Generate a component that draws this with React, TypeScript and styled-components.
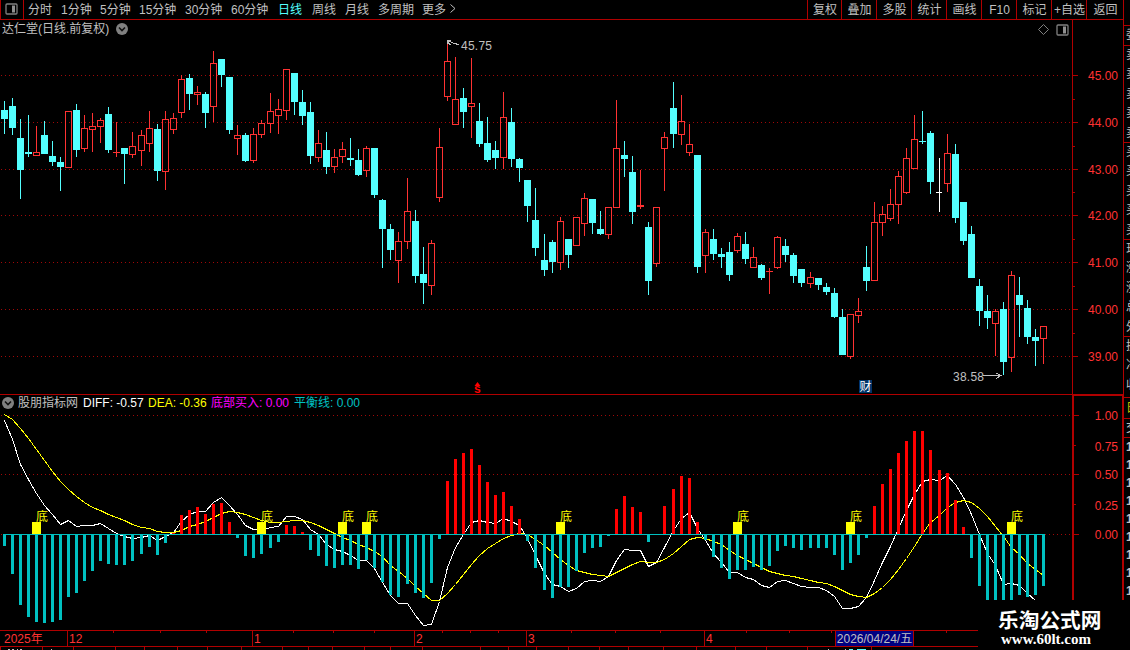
import styled, { createGlobalStyle } from 'styled-components';

type CandleKind = 'u' | 'd' | 'f';
type Candle = [CandleKind, number, number, number, number];

const colors = {
  line: '#b00000',
  up: '#ff3232',
  down: '#54ffff',
  text: '#c0c0c0',
  bar: '#00c0c0',
  muted: '#808080',
};

const PERIODS = [
  { label: '分时', width: 33 },
  { label: '1分钟', width: 39 },
  { label: '5分钟', width: 39 },
  { label: '15分钟', width: 46 },
  { label: '30分钟', width: 46 },
  { label: '60分钟', width: 47 },
  { label: '日线', width: 34 },
  { label: '周线', width: 33 },
  { label: '月线', width: 33 },
  { label: '多周期', width: 44 },
  { label: '更多', width: 27 },
];

const TOOLS = ['复权', '叠加', '多股', '统计', '画线', 'F10', '标记', '+自选', '返回'];

// kind, high, body top, body bottom, low
const CANDLES: Candle[] = [
  ['d', 101, 110, 119, 134], ['d', 98, 106, 128, 135], ['d', 119, 138, 170, 199], ['d', 115, 152, 154, 157],
  ['u', 126, 152, 156, 156], ['d', 121, 135, 154, 154], ['d', 141, 156, 162, 166], ['d', 157, 162, 167, 191],
  ['u', 111, 111, 168, 168], ['d', 104, 110, 150, 157], ['u', 115, 128, 149, 152], ['u', 113, 126, 130, 152],
  ['u', 118, 120, 127, 143], ['d', 107, 114, 150, 153], ['u', 122, 152, 153, 157], ['d', 148, 148, 154, 184],
  ['u', 132, 146, 155, 158], ['u', 130, 135, 151, 166], ['u', 111, 128, 144, 152], ['d', 124, 129, 171, 181],
  ['u', 111, 119, 172, 190], ['u', 113, 118, 130, 134], ['u', 75, 79, 113, 118], ['d', 74, 78, 94, 110],
  ['u', 86, 92, 95, 105], ['d', 92, 94, 113, 128], ['u', 51, 63, 107, 122], ['d', 59, 59, 75, 87],
  ['d', 77, 77, 130, 134], ['u', 125, 135, 139, 155], ['d', 133, 135, 161, 162], ['u', 128, 134, 161, 163],
  ['u', 120, 123, 135, 138], ['u', 93, 111, 124, 133], ['u', 99, 109, 116, 134], ['u', 69, 69, 111, 120],
  ['d', 73, 73, 102, 115], ['d', 90, 102, 116, 125], ['d', 102, 112, 156, 164], ['u', 130, 143, 158, 162],
  ['d', 132, 150, 167, 174], ['u', 149, 157, 167, 173], ['u', 142, 149, 157, 163], ['d', 138, 158, 160, 166],
  ['d', 149, 160, 175, 176], ['u', 146, 148, 171, 177], ['d', 148, 148, 195, 198], ['d', 199, 200, 229, 268],
  ['d', 224, 229, 250, 260], ['u', 232, 241, 261, 283], ['u', 178, 211, 242, 249], ['d', 210, 221, 276, 283],
  ['d', 247, 274, 283, 304], ['u', 240, 243, 286, 295], ['u', 128, 147, 198, 202], ['u', 43, 61, 97, 101],
  ['u', 57, 99, 125, 125], ['d', 88, 98, 112, 128], ['u', 58, 103, 107, 138], ['d', 103, 121, 144, 147],
  ['d', 117, 143, 160, 162], ['d', 141, 150, 158, 169], ['u', 92, 117, 158, 169], ['d', 108, 122, 159, 167],
  ['d', 158, 159, 168, 182], ['d', 180, 180, 206, 222], ['d', 188, 220, 248, 256], ['d', 234, 260, 270, 276],
  ['d', 240, 242, 262, 273], ['u', 217, 221, 263, 270], ['d', 239, 239, 255, 268], ['u', 217, 217, 246, 246],
  ['u', 193, 198, 224, 236], ['d', 199, 199, 223, 234], ['d', 211, 229, 234, 235], ['u', 207, 207, 235, 239],
  ['u', 100, 148, 208, 208], ['d', 141, 155, 159, 177], ['d', 156, 172, 212, 224], ['u', 170, 205, 207, 209],
  ['d', 222, 227, 281, 295], ['u', 207, 207, 264, 267], ['u', 132, 137, 149, 191], ['d', 82, 108, 134, 148],
  ['u', 95, 121, 135, 145], ['u', 124, 144, 153, 156], ['d', 155, 155, 267, 273], ['u', 229, 232, 256, 273],
  ['d', 229, 239, 254, 260], ['d', 248, 254, 257, 268], ['d', 242, 252, 275, 281], ['u', 233, 236, 251, 253],
  ['d', 232, 244, 259, 264], ['u', 247, 257, 268, 268], ['d', 264, 265, 278, 280], ['u', 268, 271, 272, 294],
  ['u', 236, 237, 268, 269], ['d', 239, 246, 255, 262], ['d', 253, 255, 276, 283], ['d', 269, 269, 283, 287],
  ['u', 272, 277, 284, 288], ['d', 278, 278, 285, 290], ['d', 283, 287, 292, 295], ['d', 288, 293, 317, 318],
  ['d', 309, 317, 355, 355], ['u', 314, 314, 357, 359], ['u', 298, 311, 316, 323], ['d', 246, 267, 281, 291],
  ['u', 202, 222, 281, 281], ['u', 206, 214, 223, 236], ['u', 189, 204, 219, 221], ['u', 171, 176, 205, 224],
  ['u', 148, 158, 193, 194], ['u', 115, 139, 169, 169], ['d', 111, 141, 142, 144], ['d', 131, 133, 182, 194],
  ['f', 158, 192, 193, 212], ['u', 134, 153, 184, 192], ['d', 144, 154, 218, 223], ['d', 202, 202, 241, 245],
  ['d', 226, 234, 278, 278], ['d', 279, 286, 311, 326], ['d', 295, 311, 318, 329], ['u', 309, 311, 324, 356],
  ['d', 302, 309, 362, 375], ['u', 271, 275, 358, 372], ['d', 277, 295, 305, 337], ['d', 300, 308, 337, 344],
  ['d', 329, 337, 341, 366], ['u', 326, 326, 339, 364],
];

const BARS = [
  546, 574, 605, 617, 622, 623, 622, 620, 597, 593, 581, 571, 561, 564, 565, 565, 561, 554, 547, 555,
  543, 533, 515, 510, 507, 514, 504, 503, 522, 538, 556, 558, 554, 548, 542, 525, 526, 532, 550, 556,
  566, 568, 565, 565, 569, 560, 568, 582, 595, 597, 584, 593, 598, 583, 539, 481, 459, 453, 449, 465,
  482, 495, 492, 506, 519, 541, 568, 590, 598, 587, 587, 571, 553, 548, 547, 536, 509, 496, 507, 512,
  542, 535, 506, 489, 476, 478, 522, 540, 557, 568, 579, 570, 570, 567, 570, 566, 551, 546, 548, 550,
  548, 548, 548, 555, 570, 563, 555, 538, 506, 484, 469, 453, 441, 431, 431, 450, 470, 473, 500, 527,
  558, 586, 600, 600, 600, 600, 595, 597, 595, 586,
];

const DIFF = [
  420, 439, 464, 479, 493, 505, 514, 524, 520, 526, 525, 525, 523, 528, 533, 536, 538, 537, 535, 540,
  536, 532, 521, 514, 511, 511, 502, 497, 505, 514, 525, 529, 530, 527, 526, 516, 516, 519, 529, 534,
  544, 549, 551, 555, 560, 560, 568, 582, 595, 603, 603, 615, 625, 624, 601, 567, 547, 534, 522, 520,
  522, 523, 518, 521, 525, 538, 555, 573, 584, 586, 591, 588, 581, 580, 581, 576, 560, 549, 550, 550,
  566, 562, 547, 530, 518, 512, 528, 540, 553, 562, 572, 572, 577, 579, 585, 587, 581, 580, 583, 586,
  587, 587, 590, 596, 608, 608, 606, 597, 580, 562, 546, 528, 510, 494, 481, 479, 480, 475, 484, 497,
  514, 534, 553, 565, 584, 583, 585, 593, 600,
];

const DEA = [
  414, 419, 428, 438, 449, 460, 471, 481, 489, 496, 502, 507, 510, 514, 517, 520, 524, 527, 528, 531,
  532, 532, 530, 526, 524, 521, 517, 513, 511, 512, 514, 517, 520, 522, 522, 521, 520, 520, 522, 525,
  529, 533, 537, 540, 544, 547, 551, 556, 565, 571, 578, 586, 593, 600, 600, 593, 584, 574, 564, 555,
  548, 543, 538, 535, 533, 534, 539, 545, 552, 559, 565, 570, 572, 574, 575, 576, 572, 568, 564, 561,
  562, 562, 559, 553, 546, 539, 537, 538, 541, 544, 550, 555, 559, 563, 567, 571, 573, 575, 576, 578,
  580, 582, 583, 586, 590, 594, 596, 597, 593, 587, 579, 569, 558, 546, 533, 522, 515, 507, 502, 500,
  502, 508, 516, 526, 536, 547, 554, 563, 569, 575,
];

const SIGNALS = [4, 32, 42, 45, 69, 91, 105, 125];
const PRICE_GRID = [75, 122, 169, 215, 262, 309, 356];
const PRICE_MINOR = [99, 146, 192, 239, 286, 333];
const PRICE_LABELS = ['45.00', '44.00', '43.00', '42.00', '41.00', '40.00', '39.00'];
const ZERO_Y = 534;

const SCALE = [
  { label: '1.00', height: 31 },
  { label: '0.75', height: 28 },
  { label: '0.50', height: 31 },
  { label: '0.25', height: 29 },
  { label: '0.00', height: 20 },
];

const MONTHS = [
  { label: '2025年', width: 67, inset: 4 },
  { label: '12', width: 185, inset: 1 },
  { label: '1', width: 162, inset: 1 },
  { label: '2', width: 112, inset: 1 },
  { label: '3', width: 178, inset: 1 },
  { label: '4', width: 131, inset: 1 },
];
const WEEK_TICKS = [113, 160, 206, 293, 333, 374, 442, 470, 498, 571, 615, 660, 746, 789, 831, 946];
const TAB_TICKS = [
  0, 42, 73, 115, 144, 177, 207, 241, 282, 308, 332, 364, 390, 422, 480, 508, 536, 568, 599, 628, 663, 696,
  735, 766, 807, 871,
];

const QUOTE_GROUPS = [
  { chars: ['委'], top: 26, height: 19, row: 19 },
  { chars: ['卖', '卖', '卖', '卖', '卖'], top: 46, height: 96, row: 19.4 },
  { chars: ['买', '买', '买', '买', '买'], top: 143, height: 96, row: 19.4 },
  { chars: ['现', '涨', '涨', '总', '外'], top: 240, height: 96, row: 19.4 },
  { chars: ['换', '净', '收'], top: 337, height: 60, row: 19.4 },
];

const candleX = (i: number) => 4 + 8 * i + Math.floor(i * 0.0602 + 0.02);
const toPoints = (values: number[]) => values.map((y, i) => `${candleX(i) + 0.5},${y + 0.5}`).join(' ');

const GlobalStyle = createGlobalStyle`
  body {
    margin: 0;
    background: #000;
    overflow: hidden;
  }
`;

const Screen = styled.div`
  position: relative;
  display: flex;
  width: 1130px;
  height: 650px;
  overflow: hidden;
  background: #000;
  color: ${colors.text};
  font-family: 'Liberation Sans', 'Noto Sans CJK SC', sans-serif;
  font-size: 12px;
  line-height: 16px;
  white-space: nowrap;

  svg {
    display: block;
  }
`;

const Terminal = styled.main`
  display: flex;
  flex-direction: column;
  width: 1123px;
`;

const TopBar = styled.nav`
  display: flex;
  box-sizing: border-box;
  height: 20px;
  border-bottom: 1px solid ${colors.line};
`;

const LayoutButton = styled.div`
  display: flex;
  box-sizing: border-box;
  width: 24px;
  padding: 3px 0 0 4px;
  border: solid ${colors.line};
  border-width: 0 1px;
`;

const PeriodList = styled.div`
  display: flex;
  flex: 1;
  padding-left: 4px;
`;

const Period = styled.span<{ $width: number; $active: boolean }>`
  width: ${(p) => p.$width}px;
  line-height: 20px;
  color: ${(p) => (p.$active ? colors.down : colors.text)};
`;

const MoreArrow = styled.svg`
  margin-top: 4px;
`;

const Tool = styled.span<{ $wide: boolean }>`
  box-sizing: border-box;
  width: ${(p) => (p.$wide ? 35 : 34)}px;
  padding-left: 1px;
  border-left: 1px solid ${colors.line};
  text-align: center;
  line-height: 20px;

  &:last-child {
    width: 37px;
  }
`;

const Pane = styled.section<{ $height: number }>`
  position: relative;
  display: flex;
  height: ${(p) => p.$height}px;
`;

const PricePane = styled(Pane)`
  border-bottom: 1px solid ${colors.line};
`;

const PaneHeader = styled.header<{ $top: number; $left: number; $gap: number }>`
  position: absolute;
  top: ${(p) => p.$top}px;
  left: ${(p) => p.$left}px;
  display: flex;
  align-items: center;
  gap: ${(p) => p.$gap}px;
  height: 16px;
`;

const PaneActions = styled.div`
  position: absolute;
  top: 4px;
  right: 54px;
  display: flex;
  gap: 7px;
`;

const Legend = styled.span<{ $color: string; $width: number }>`
  width: ${(p) => p.$width}px;
  color: ${(p) => p.$color};
`;

const Axis = styled.aside<{ $thick?: boolean }>`
  position: relative;
  box-sizing: border-box;
  width: 51px;
  color: ${colors.up};
  border-left: ${(p) => (p.$thick ? 2 : 1)}px solid ${colors.line};
  border-right: ${(p) => (p.$thick ? 1 : 0)}px solid ${colors.line};
  border-top: ${(p) => (p.$thick ? 1 : 0)}px solid ${colors.line};
`;

const AxisTicks = styled.svg`
  position: absolute;
  top: 0;
  left: 0;
`;

const AxisLabels = styled.div<{ $top: number; $right: number }>`
  display: flex;
  flex-direction: column;
  align-items: flex-end;
  padding: ${(p) => `${p.$top}px ${p.$right}px 0 0`};
`;

const AxisLabel = styled.span<{ $height: number }>`
  height: ${(p) => p.$height}px;
`;

const TimeAxis = styled.div`
  position: relative;
  display: flex;
  box-sizing: border-box;
  height: 17px;
  border: solid ${colors.line};
  border-width: 1px 0;
`;

const Month = styled.span<{ $width: number; $inset: number }>`
  box-sizing: border-box;
  width: ${(p) => p.$width}px;
  padding-left: ${(p) => p.$inset}px;
  color: ${colors.up};

  & + & {
    border-left: 1px solid ${colors.line};
  }
`;

const CursorDate = styled.span`
  box-sizing: border-box;
  width: 79px;
  border: solid ${colors.line};
  border-width: 0 1px;
  background: #000080;
  text-align: center;
`;

const QuoteStrip = styled.aside`
  position: relative;
  box-sizing: border-box;
  width: 7px;
  padding-top: 25px;
  overflow: hidden;
  border-left: 1px solid ${colors.line};
`;

const QuoteGroup = styled.div<{ $height: number; $row: number }>`
  height: ${(p) => p.$height}px;
  padding-left: 2px;
  overflow: hidden;
  border-top: 1px solid ${colors.line};
  line-height: ${(p) => p.$row}px;
`;

const QuoteChar = styled.div<{ $color?: string }>`
  color: ${(p) => p.$color ?? colors.text};
`;

const TickRows = styled(QuoteGroup)`
  font-weight: 700;
`;

const Watermark = styled.div`
  position: absolute;
  right: 0;
  bottom: 0;
  box-sizing: border-box;
  width: 152px;
  height: 50px;
  padding: 7px 0 0 20px;
  background: #000;
  color: #fff;
  font-weight: 700;
`;

const WatermarkName = styled.div`
  font-family: 'Noto Sans CJK SC', sans-serif;
  font-size: 20.7px;
  line-height: 24px;
`;

const WatermarkUrl = styled.div`
  padding-left: 3px;
  font-family: 'Liberation Serif', serif;
  font-size: 15px;
  line-height: 16px;
`;

function PanelIcon() {
  return (
    <svg width="13" height="12" viewBox="0 0 13 12">
      <rect x="1" y="1" width="11" height="10" rx="1" fill="none" stroke={colors.muted} strokeWidth="1.3" />
      <rect x="7" y="2.5" width="3" height="7" fill="#909090" />
    </svg>
  );
}

function DropIcon() {
  return (
    <svg width="12" height="12" viewBox="0 0 12 12">
      <circle cx="6" cy="6" r="6" fill={colors.muted} />
      <path d="M3 4.5 L6 7.5 L9 4.5" fill="none" stroke="#101010" strokeWidth="1.6" />
    </svg>
  );
}

function GridLine({ y, from = 1 }: { y: number; from?: number }) {
  return <line x1={from} x2="1071" y1={y + 0.5} y2={y + 0.5} stroke="#a00808" strokeDasharray="1 3" />;
}

function CandleShape({ candle, x }: { candle: Candle; x: number }) {
  const [kind, high, top, bottom, low] = candle;
  const color = { u: colors.up, d: colors.down, f: '#ffffff' }[kind];
  const hollow = kind === 'u' && bottom - top > 2;
  return (
    <g fill={color}>
      <rect x={x} y={high} width="1" height={top - high} />
      <rect x={x} y={bottom} width="1" height={low - bottom} />
      {hollow ? (
        <rect x={x - 2.5} y={top + 0.5} width="6" height={bottom - top - 1} fill="none" stroke={color} />
      ) : (
        <rect x={x - 3} y={top} width={kind === 'f' ? 6 : 7} height={bottom - top} />
      )}
      {kind === 'f' && <rect x={x} y={top} width="1" height={bottom - top} />}
    </g>
  );
}

function PriceChart() {
  return (
    <svg width="1072" height="374" viewBox="0 20 1072 374" shapeRendering="crispEdges">
      {PRICE_GRID.map((y) => (
        <GridLine key={y} y={y} />
      ))}
      {CANDLES.map((candle, i) => (
        <CandleShape key={i} candle={candle} x={candleX(i)} />
      ))}
      <g fill="none" stroke={colors.text}>
        <path d="M447.5 44V40.5H451M447 41.5H450L454 43.5L459 44.5M447 42L451 45" />
        <path d="M983 375.5H1001M996 373L1001 375.5L996 378.5" />
      </g>
      <g fill={colors.text} fontSize="12">
        <text x="461" y="50" textLength="31">45.75</text>
        <text x="953" y="381" textLength="31">38.58</text>
      </g>
      <g fill="#ff0000" shapeRendering="auto">
        <text x="474" y="393" fontSize="12" fontWeight="700">s</text>
        <path d="M474.5 386L477.5 382L480.5 386Z" />
      </g>
      <rect x="859" y="380" width="13" height="13" fill="#003468" />
      <text x="859.5" y="391" fontSize="12" fill="#ffffff">财</text>
    </svg>
  );
}

function IndicatorChart() {
  return (
    <svg width="1072" height="235" viewBox="0 395 1072 235" shapeRendering="crispEdges">
      <GridLine y={415} />
      <GridLine y={474} />
      <GridLine y={ZERO_Y} />
      <g fill="none" strokeWidth="1">
        <polyline points={toPoints(DIFF)} stroke="#ffffff" />
        <polyline points={toPoints(DEA)} stroke="#ffff00" />
      </g>
      {BARS.map((y, i) => (
        <rect
          key={i}
          x={candleX(i) - 1}
          y={Math.min(y, ZERO_Y)}
          width="3"
          height={Math.abs(y - ZERO_Y)}
          fill={y < ZERO_Y ? '#ff0000' : colors.bar}
        />
      ))}
      {SIGNALS.map((i) => (
        <g key={i} fill="#ffff00">
          <rect x={candleX(i) - 4} y="522" width="9" height="12" />
          <text x={candleX(i)} y="521" fontSize="12">底</text>
        </g>
      ))}
      <rect x="3" y={ZERO_Y} width="1042" height="1" fill={colors.bar} />
    </svg>
  );
}

function TickMarks({ major, minor, top, height }: { major: number[]; minor: number[]; top: number; height: number }) {
  return (
    <AxisTicks width="6" height={height} viewBox={`0 ${top} 6 ${height}`} fill={colors.line}>
      {major.map((y) => (
        <rect key={y} y={y} width="5" height="1" />
      ))}
      {minor.map((y) => (
        <rect key={y} y={y} width="2" height="1" />
      ))}
    </AxisTicks>
  );
}

function App() {
  return (
    <Screen>
      <GlobalStyle />
      <Terminal>
        <TopBar>
          <LayoutButton>
            <PanelIcon />
          </LayoutButton>
          <PeriodList>
            {PERIODS.map(({ label, width }) => (
              <Period key={label} $width={width} $active={label === '日线'}>
                {label}
              </Period>
            ))}
            <MoreArrow width="8" height="10" viewBox="0 0 8 10">
              <path d="M1.5 0.5L6 4.5L1.5 8.5" fill="none" stroke={colors.text} />
            </MoreArrow>
          </PeriodList>
          {TOOLS.map((label, i) => (
            <Tool key={label} $wide={i > 0}>
              {label}
            </Tool>
          ))}
        </TopBar>

        <PricePane $height={374}>
          <PriceChart />
          <PaneHeader $top={1} $left={2} $gap={7}>
            <span>达仁堂(日线.前复权)</span>
            <DropIcon />
          </PaneHeader>
          <PaneActions>
            <svg width="11" height="11" viewBox="0 0 11 11">
              <path d="M5.5 0.5L10.5 5.5L5.5 10.5L0.5 5.5Z" fill="none" stroke={colors.muted} />
            </svg>
            <PanelIcon />
          </PaneActions>
          <Axis>
            <TickMarks major={PRICE_GRID} minor={PRICE_MINOR} top={20} height={374} />
            <AxisLabels $top={48} $right={5}>
              {PRICE_LABELS.map((label) => (
                <AxisLabel key={label} $height={46.8}>
                  {label}
                </AxisLabel>
              ))}
            </AxisLabels>
          </Axis>
        </PricePane>

        <Pane $height={235}>
          <IndicatorChart />
          <PaneHeader $top={0} $left={2} $gap={4}>
            <DropIcon />
            <Legend $color={colors.text} $width={61}>股朋指标网</Legend>
            <Legend $color="#ffffff" $width={61}>DIFF: -0.57</Legend>
            <Legend $color="#ffff00" $width={59}>DEA: -0.36</Legend>
            <Legend $color="#ff00ff" $width={79}>底部买入: 0.00</Legend>
            <Legend $color={colors.bar} $width={68}>平衡线: 0.00</Legend>
          </PaneHeader>
          <Axis $thick>
            <TickMarks major={[415, 474, 534]} minor={[445, 504]} top={396} height={230} />
            <AxisLabels $top={12} $right={4}>
              {SCALE.map(({ label, height }) => (
                <AxisLabel key={label} $height={height}>
                  {label}
                </AxisLabel>
              ))}
            </AxisLabels>
          </Axis>
        </Pane>

        <TimeAxis>
          {MONTHS.map(({ label, width, inset }) => (
            <Month key={label} $width={width} $inset={inset}>
              {label}
            </Month>
          ))}
          <CursorDate>2026/04/24/五</CursorDate>
          <AxisTicks width="978" height="2" fill={colors.line}>
            {WEEK_TICKS.map((x) => (
              <rect key={x} x={x} width="1" height="2" />
            ))}
          </AxisTicks>
        </TimeAxis>

        <svg width="978" height="3" shapeRendering="crispEdges">
          {TAB_TICKS.map((x) => (
            <rect key={x} x={x} width="1" height="3" fill={colors.line} />
          ))}
          <path d="M8 2.5H10M12 2.5H14M17 2.5H18M20 2.5H22M51 2.5H52M828 2.5H829M845 2.5H846" stroke={colors.text} />
          <path d="M849 2.5H853M857 2.5H866" stroke={colors.down} />
        </svg>
      </Terminal>

      <QuoteStrip>
        {QUOTE_GROUPS.map(({ chars, top, height, row }) => (
          <QuoteGroup key={top} $height={height} $row={row}>
            {chars.map((char, i) => (
              <QuoteChar key={i}>{char}</QuoteChar>
            ))}
          </QuoteGroup>
        ))}
        <QuoteGroup $height={20} $row={21}>
          <QuoteChar $color="#c0c000">日</QuoteChar>
        </QuoteGroup>
        <QuoteGroup $height={18} $row={18}>
          <QuoteChar>交</QuoteChar>
        </QuoteGroup>
        <TickRows $height={162} $row={18}>
          {Array.from({ length: 9 }, (_, i) => (
            <QuoteChar key={i}>1</QuoteChar>
          ))}
        </TickRows>
      </QuoteStrip>

      <Watermark>
        <WatermarkName>乐淘公式网</WatermarkName>
        <WatermarkUrl>www.60lt.com</WatermarkUrl>
      </Watermark>
    </Screen>
  );
}

export default App;
